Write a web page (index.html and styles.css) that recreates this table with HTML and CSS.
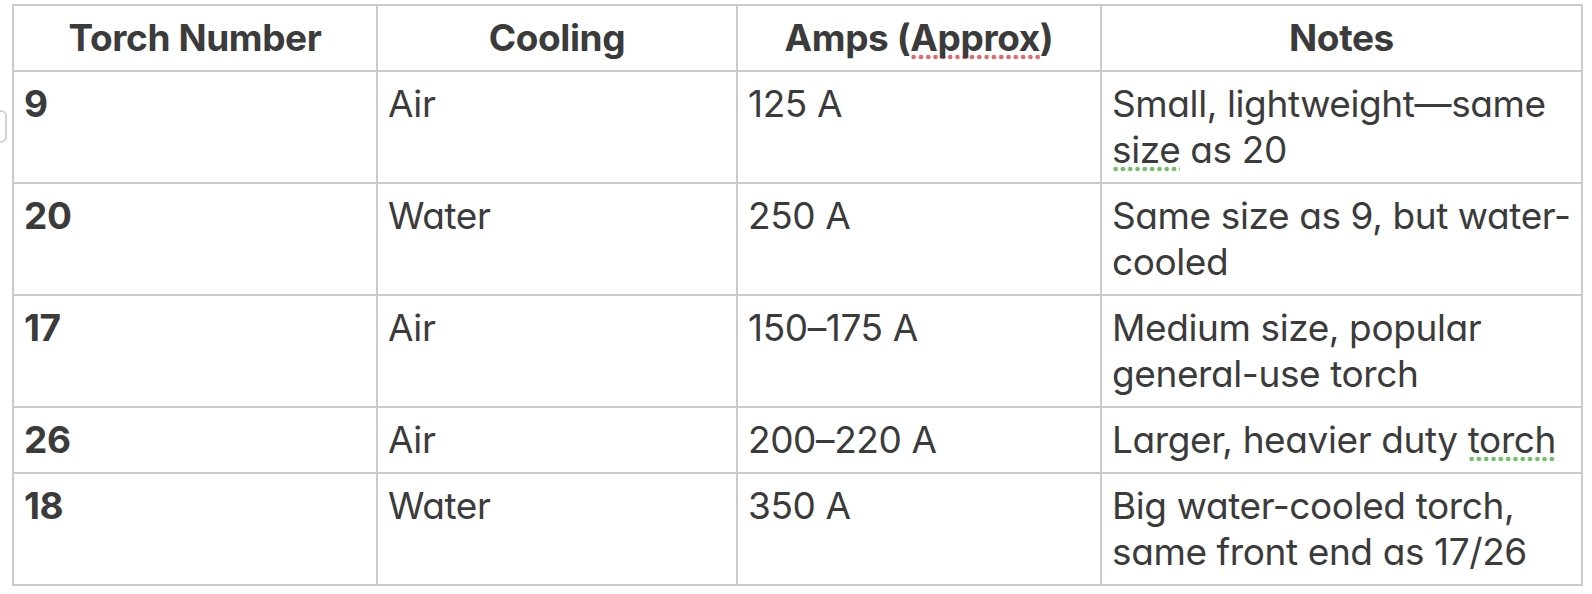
FILE: index.html
```html
<!DOCTYPE html>
<html lang="en">
<head>
<meta charset="utf-8">
<title>Torch table</title>
<link rel="stylesheet" href="styles.css">
</head>
<body>
<div class="edge-tab"></div>
<table class="torch-table">
  <colgroup>
    <col class="c1"><col class="c2"><col class="c3"><col class="c4">
  </colgroup>
  <thead>
    <tr>
      <th>Torch Number</th>
      <th>Cooling</th>
      <th>Amps (<span class="spell-red">Approx</span>)</th>
      <th>Notes</th>
    </tr>
  </thead>
  <tbody>
    <tr class="tall">
      <td class="num">9</td>
      <td>Air</td>
      <td>125 A</td>
      <td>Small, lightweight—same <span class="spell-green">size</span> as 20</td>
    </tr>
    <tr class="tall">
      <td class="num">20</td>
      <td>Water</td>
      <td>250 A</td>
      <td>Same size as 9, but water-cooled</td>
    </tr>
    <tr class="tall">
      <td class="num">17</td>
      <td>Air</td>
      <td>150–175 A</td>
      <td>Medium size, popular general-use torch</td>
    </tr>
    <tr>
      <td class="num">26</td>
      <td>Air</td>
      <td>200–220 A</td>
      <td>Larger, heavier duty <span class="spell-green">torch</span></td>
    </tr>
    <tr class="tall">
      <td class="num">18</td>
      <td>Water</td>
      <td>350 A</td>
      <td>Big water-cooled torch, same front end as 17/26</td>
    </tr>
  </tbody>
</table>
</body>
</html>
```
FILE: styles.css
```css
html, body {
  margin: 0;
  padding: 0;
  background: #ffffff;
}

body {
  padding: 4px 0 0 12px;
  font-family: Inter, "Noto Sans", sans-serif;
  font-feature-settings: "cv11" 1;
  color: #3b3b3b;
  position: relative;
}

.edge-tab {
  position: absolute;
  left: -21px;
  top: 110px;
  width: 24px;
  height: 29px;
  border: 2px solid #d2d2d2;
  border-radius: 6px;
  background: #fff;
}

.torch-table {
  border-collapse: collapse;
  table-layout: fixed;
  width: 1569px;
  font-size: 37px;
  line-height: 46px;
}

.c1 { width: 364px; }
.c2 { width: 360px; }
.c3 { width: 364px; }
.c4 { width: 481px; }

.torch-table th,
.torch-table td {
  border: 2px solid #cbcbcb;
  padding: 9px 10px 9px 10px;
  vertical-align: top;
  text-align: left;
  letter-spacing: -0.4px;
}

.torch-table th {
  font-weight: 700;
  text-align: center;
  vertical-align: middle;
}

.torch-table td.num {
  font-weight: 700;
}

.spell-red,
.spell-green {
  background-repeat: repeat-x;
  background-size: 7.3px 6px;
  background-position: 0 calc(100% - 0px);
}

.spell-red {
  background-image: radial-gradient(circle at center, #e06a6a 2px, rgba(224, 106, 106, 0) 2.6px);
}

.spell-green {
  background-image: radial-gradient(circle at center, #72c066 2px, rgba(114, 192, 102, 0) 2.6px);
}
```
